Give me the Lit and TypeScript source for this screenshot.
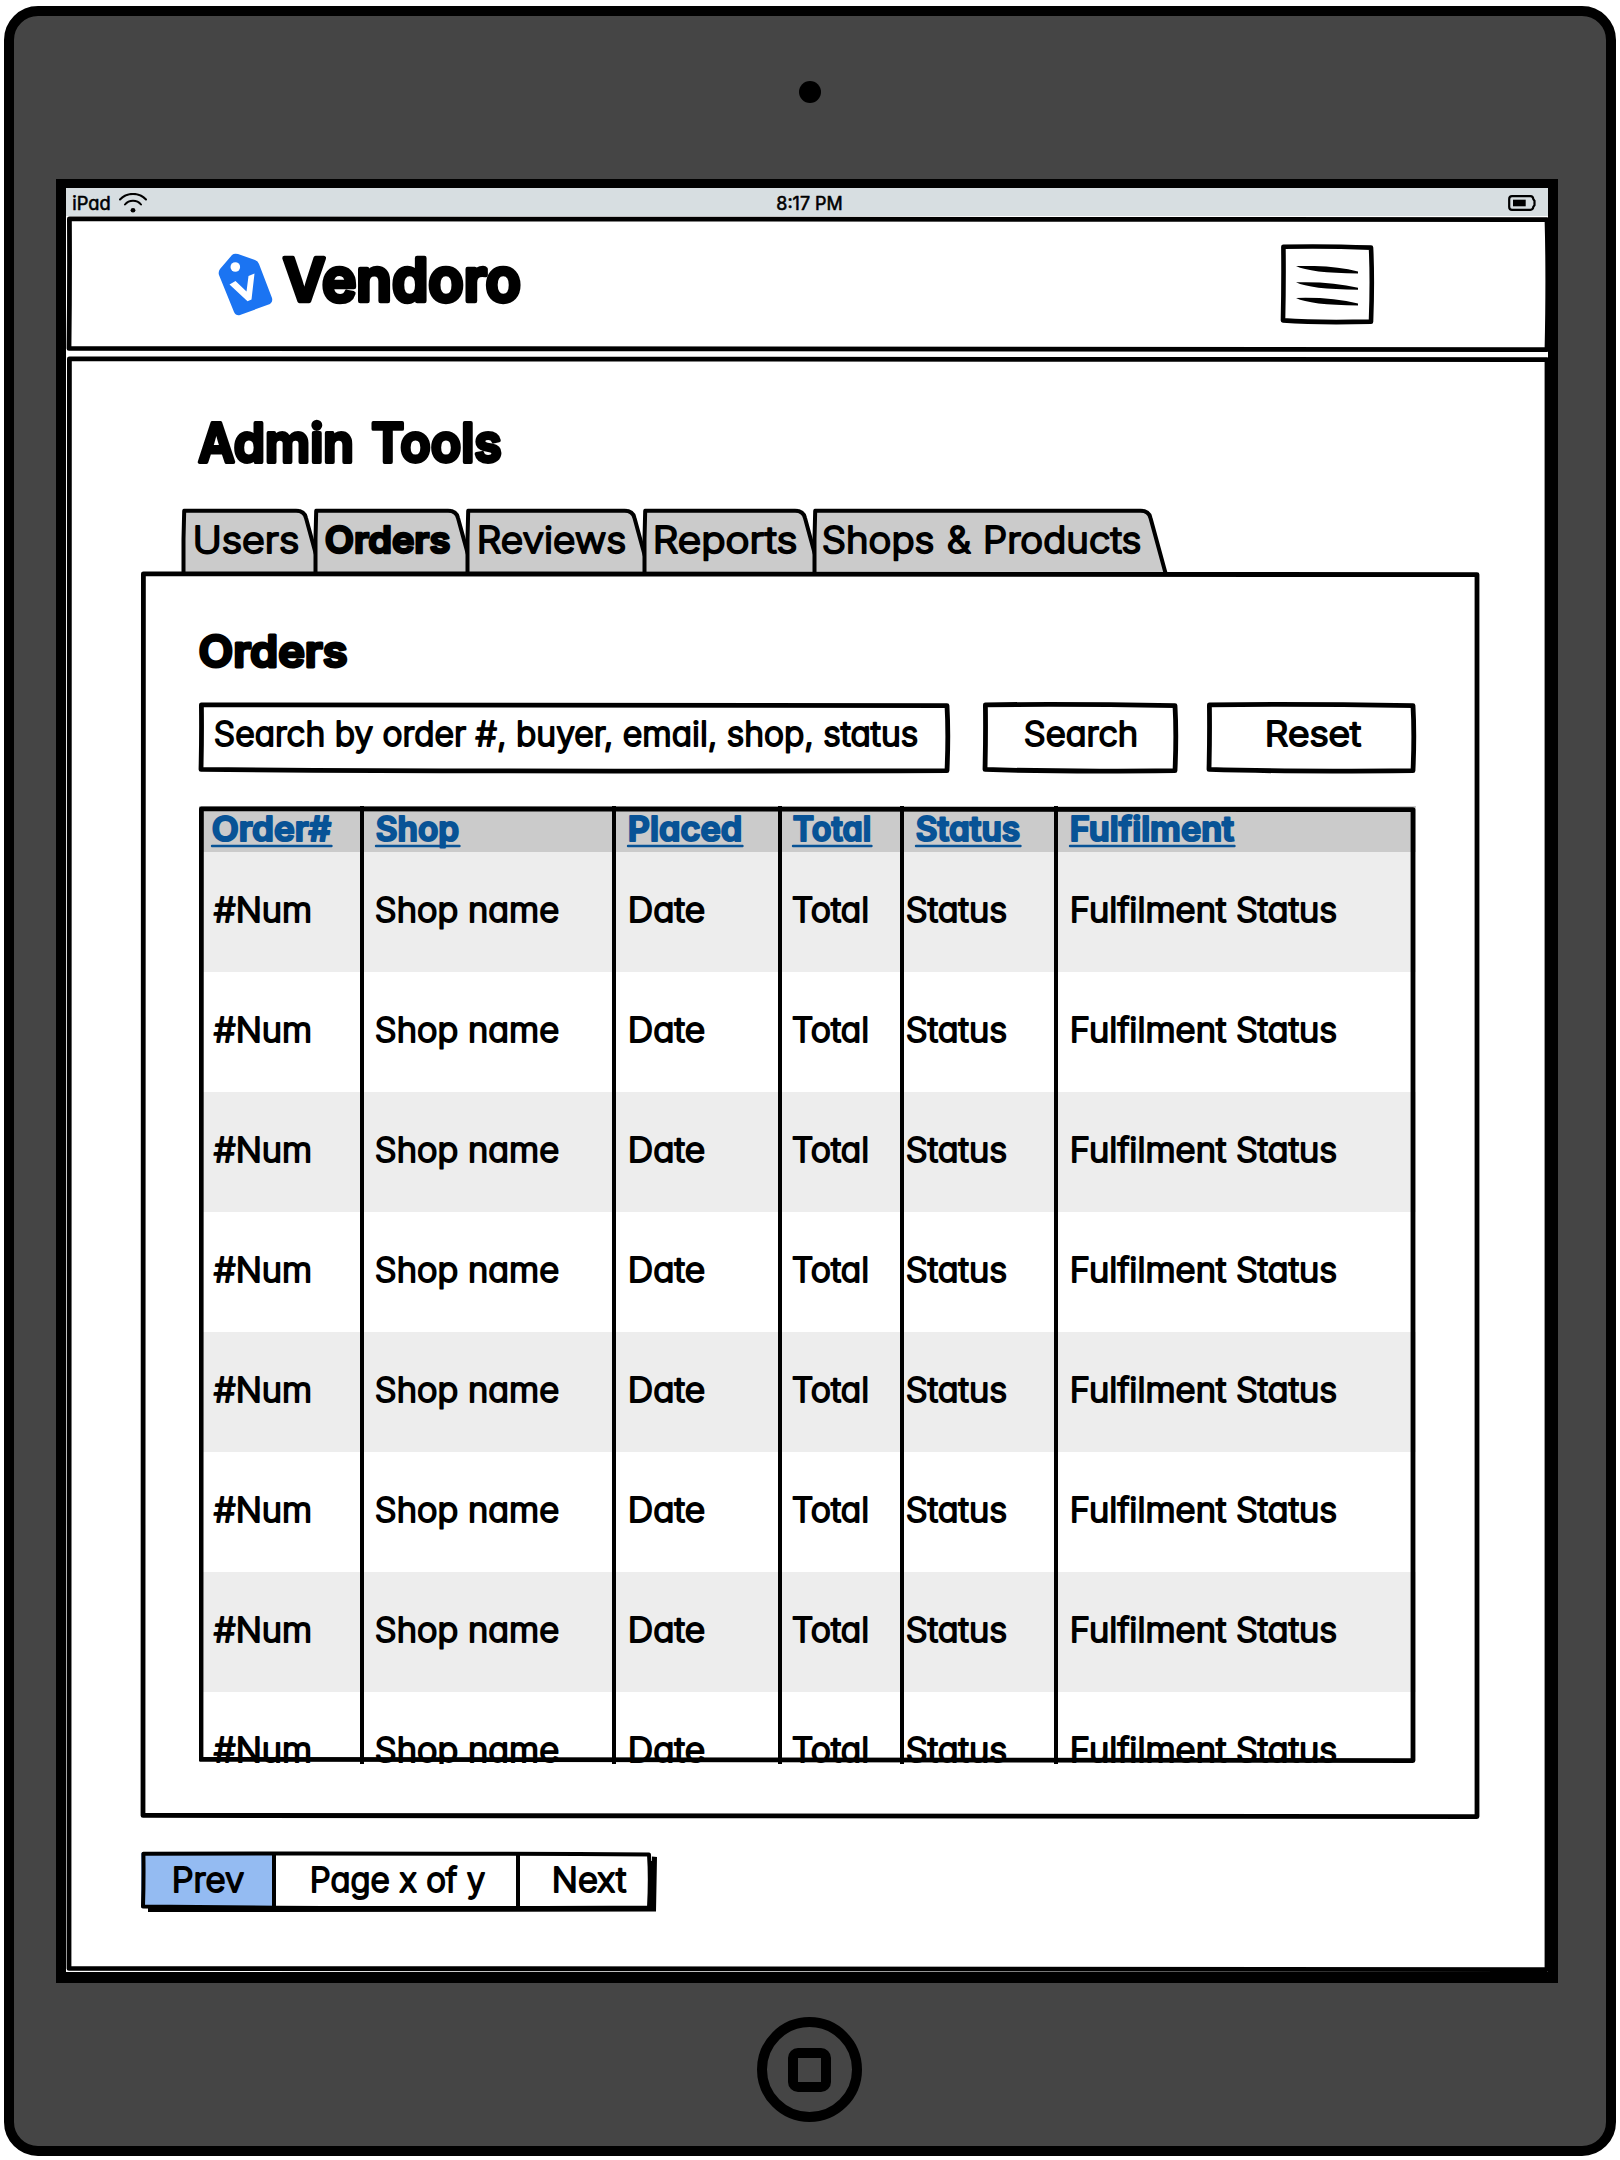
import { LitElement, html, svg, css } from "lit";
import { customElement, property } from "lit/decorators.js";

/* One line of hand-lettered text. Its box runs from cap height to baseline. */
@customElement("ink-text")
class InkText extends LitElement {
  @property() text = "";
  @property({ type: Number }) w = 100;
  @property({ type: Number }) size = 33.5;
  @property({ type: Number }) weight = 340;
  @property({ type: Number }) ink = 1.9;
  @property({ type: Number }) gap = 0;
  @property() color = "#000";
  @property({ type: Boolean }) underline = false;
  static styles = css`
    :host { display: block; flex: none; }
    svg { display: block; overflow: visible; }
    text {
      font-family: Inter, "Open Sans", "Liberation Sans", sans-serif;
      font-feature-settings: "cv11" 1;
      stroke-linejoin: round;
      stroke-linecap: round;
      white-space: pre;
    }
  `;
  render() {
    const h = Math.round(this.size * 0.727);
    const pad = this.size * 0.035;
    return html`<svg width=${this.w} height=${h}>
      <text x=${-pad} y=${h} textLength=${this.w + pad * 2} lengthAdjust="spacingAndGlyphs"
        font-size=${this.size} font-weight=${this.weight} word-spacing=${this.gap} fill=${this.color}
        stroke=${this.color} stroke-width=${this.ink}>${this.text}</text>
      ${this.underline
        ? svg`<line x1="-1" x2=${this.w + 1.5} y1=${h + 5} y2=${h + 5} stroke=${this.color} stroke-width="2.4" stroke-linecap="round"/>`
        : ""}
    </svg>`;
  }
}

/* Slightly uneven pen outline laid over its parent box. */
@customElement("pen-frame")
class PenFrame extends LitElement {
  @property({ type: Number }) w = 100;
  @property({ type: Number }) h = 100;
  @property({ type: Number }) pen = 4.8;
  @property({ type: Number }) sway = 1;
  static styles = css`
    :host { position: absolute; inset: 0; pointer-events: none; }
    svg { display: block; overflow: visible; }
  `;
  render() {
    const { w, h, sway: s } = this;
    const d = `M2.4 2.8 Q${w * 0.45} ${2.8 - s} ${w - 3} 3.6 Q${w - 3 + s * 1.6} ${h * 0.45} ${w - 3} ${h - 2.4}
      Q${w * 0.4} ${h - 2 + s} 2 ${h - 3.6} Q${1.8 + s} ${h * 0.5} 2.4 2.8Z`;
    return html`<svg width=${w} height=${h}>
      <path d=${d} fill="none" stroke="#000" stroke-width=${this.pen} stroke-linejoin="round"/>
    </svg>`;
  }
}

const TABS = [
  { label: "Users", width: 132, ink: 104, pad: 12 },
  { label: "Orders", width: 152, ink: 123, pad: 11.5, active: true },
  { label: "Reviews", width: 176.5, ink: 147, pad: 12 },
  { label: "Reports", width: 170, ink: 142, pad: 11.5 },
  { label: "Shops & Products", width: 345.5, ink: 317, pad: 10.5 },
];

const COLUMNS = [
  { head: "Order#", headInk: 117, headPad: 14, cell: "#Num", ink: 96, pad: 16 },
  { head: "Shop", headInk: 81, headPad: 12.5, cell: "Shop name", ink: 182, pad: 11.5 },
  { head: "Placed", headInk: 112, headPad: 12.5, cell: "Date", ink: 75, pad: 12.5 },
  { head: "Total", headInk: 76, headPad: 11.5, cell: "Total", ink: 75, pad: 10.5 },
  { head: "Status", headInk: 102, headPad: 12.5, cell: "Status", ink: 99, pad: 2.5 },
  { head: "Fulfilment", headInk: 162, headPad: 12.5, cell: "Fulfilment Status", ink: 265, pad: 12.5 },
];

const ROWS = 8;

@customElement("app-root")
class AppRoot extends LitElement {
  static styles = css`
    :host { display: block; width: 1620px; height: 2160px; background: #fff; overflow: hidden; }
    * { box-sizing: border-box; }
    .stage { padding: 6px 4px 4px; height: 2160px; }
    .device {
      height: 2150px; border: 10px solid #000; border-radius: 34px; background: #454545;
      display: flex; flex-direction: column; align-items: center;
    }
    .camera { width: 22px; height: 22px; border-radius: 50%; background: #000; margin: 65px 1px 0 0; flex: none; }
    .screen {
      width: 1502px; height: 1804px; margin: 76px 0 0 42px; flex: none; background: #fff;
      border: solid #000; border-width: 9px 10px 11px; align-self: flex-start;
      display: flex; flex-direction: column;
    }
    .home {
      width: 105px; height: 105px; border: 10px solid #000; border-radius: 50%; margin: 34px 1px 0 0; flex: none;
      display: grid; place-items: center;
    }
    .home-key { width: 43px; height: 44px; border: 10px solid #000; border-radius: 10px; }
    .status {
      height: 28px; flex: none; background: #d7dee1; padding: 2px 13px 0 7px;
      display: grid; grid-template-columns: 1fr auto 1fr; align-items: center;
    }
    .carrier { display: flex; align-items: center; gap: 9px; }
    .clock { margin-left: 11px; }
    .battery { justify-self: end; margin-right: -1px; }
    svg { display: block; }
    .header {
      position: relative; margin: 0 0 0 1px; width: 1482px; height: 136px; flex: none;
      display: flex; justify-content: space-between; align-items: flex-start; padding: 28px 175px 0 151px;
    }
    .brand { display: flex; gap: 12px; padding-top: 9px; }
    .brand ink-text { margin-top: 5px; }
    .menu { position: relative; width: 93px; height: 80px; padding: 22px 15px; }
    .body {
      position: relative; margin: 4px 0 0 1px; width: 1482px; height: 1616px; flex: none; padding-left: 74px;
    }
    .title { margin: 67px 0 0 59px; }
    .tabs { display: flex; margin: 47px 0 0 41px; height: 62px; }
    .tab { position: relative; height: 62px; padding-top: 17px; flex: none; }
    .tab-shape { position: absolute; inset: 0; }
    .tab-shape svg { overflow: visible; }
    .tab ink-text { position: relative; }
    .panel { position: relative; width: 1339px; height: 1248px; padding: 64px 63px 0 58px; }
    .heading { margin-left: 1px; }
    .search { display: flex; margin-top: 35px; height: 72px; }
    .box { position: relative; height: 72px; display: flex; padding-top: 20px; }
    .field { width: 751px; padding-left: 16px; }
    .go { width: 195px; margin-left: 33px; padding-left: 42px; }
    .reset { width: 209px; margin-left: 29px; padding-left: 59px; }
    .table { position: relative; margin-top: 32px; width: 1217px; height: 958px; overflow: hidden; }
    .row { display: grid; grid-template-columns: 161px 252px 166px 122px 154px 1fr; height: 120px; background: #fff; }
    .row.odd { background: #ededed; }
    .row.head { height: 46px; background: #cbcbcb; }
    .cell { border-left: 4px solid #000; padding-top: 46px; }
    .cell:first-child { border-left: 0; }
    .head .cell { padding-top: 11px; }
    .pager { position: relative; display: flex; width: 516px; height: 61px; margin-top: 32px; }
    .page {
      position: relative; height: 55px; margin-top: 2px; padding-top: 15px; border-right: 4px solid #000; background: #fff;
    }
    .prev { width: 135px; background: #94bbf2; padding-left: 32px; }
    .pages { width: 244px; padding-left: 35px; }
    .next { width: 129px; padding-left: 33px; border-right: 0; }
    .shade { position: absolute; inset: 0; }
  `;

  private tab(t: (typeof TABS)[number]) {
    const w = t.width;
    return html`<div class="tab" style="width:${w}px;padding-left:${t.pad}px">
      <div class="tab-shape">
        <svg width=${w + 10} height="64">
          <path d="M1.500 64 L1.500 30 L2.200 1.800 H${w - 18} Q${w - 9.5} 1.800 ${w - 8} 9 L${w + 7} 64" fill="#cbcbcb" stroke="#000" stroke-width="4" stroke-linejoin="round"/>
        </svg>
      </div>
      <ink-text .text=${t.label} .w=${t.ink} .size=${37} .gap=${1.5} .weight=${t.active ? 600 : 340} .ink=${t.active ? 2.5 : 2}></ink-text>
    </div>`;
  }

  render() {
    return html`
      <div class="stage"><div class="device">
        <div class="camera"></div>
        <div class="screen">
          <div class="status">
            <div class="carrier">
              <ink-text .text=${"iPad"} .w=${37} .size=${18.5} .weight=${400} .ink=${0.6}></ink-text>
              <svg width="28" height="20" viewBox="0 0 28 20" fill="none" stroke="#000" stroke-width="2" stroke-linecap="round">
                <path d="M1 6.500C8-1 20-1 27 6.500M6 11.500c4-5 12-5 16 0"/>
                <ellipse cx="14" cy="17.300" rx="2.400" ry="2.300" fill="#000" stroke="none"/>
              </svg>
            </div>
            <ink-text class="clock" .text=${"8:17 PM"} .w=${65} .size=${18.5} .weight=${400} .ink=${0.6}></ink-text>
            <svg class="battery" width="28" height="16" viewBox="0 0 28 16">
              <path d="M4 1.200H22.500Q25 1.200 25.300 4L26.500 5.800V10.200L25.300 12Q25 14.800 22.500 14.800H4Q1.200 14.800 1.200 12V4Q1.200 1.200 4 1.200Z" fill="none" stroke="#000" stroke-width="2.200"/>
              <rect x="5" y="4.700" width="12.700" height="6.600"/>
            </svg>
          </div>

          <div class="header">
            <div class="brand">
              <svg width="55" height="63" viewBox="0 0 55 63">
                <path d="M14 2Q16 0 20 1L37 7Q40 8 41 11L54 45Q55 49 52 51L22 62Q18 63 16 59L1 22Q0 19 2 16Z" fill="#1b74f2"/>
                <circle cx="17.300" cy="14" r="4.800" fill="#fff"/>
                <path d="M11.500 31.500 17.500 28 28.500 38.500 30.500 23 36.500 20.500 33.500 46.500 29.500 48.300Z" fill="#fff"/>
              </svg>
              <ink-text .text=${"Vendoro"} .w=${234} .size=${59} .weight=${580} .ink=${4.4}></ink-text>
            </div>
            <div class="menu">
              <pen-frame .w=${93} .h=${80} .pen=${4.6}></pen-frame>
              <svg width="63" height="40" viewBox="0 0 63 40">
                <path d="M0 0Q36-1 62 5.500V7.500Q14 7 0 0ZM0 16.300Q36 15.300 62 21.800V23.800Q14 23.300 0 16.300ZM0 32Q36 31 62 37.500V39.500Q14 39 0 32Z"/>
              </svg>
            </div>
            <pen-frame .w=${1483} .h=${136}></pen-frame>
          </div>

          <div class="body">
            <pen-frame .w=${1483} .h=${1616}></pen-frame>
            <ink-text class="title" .text=${"Admin Tools"} .w=${300} .size=${53.5} .weight=${580} .ink=${3.8} .gap=${5}></ink-text>
            <div class="tabs">${TABS.map((t) => this.tab(t))}</div>
            <div class="panel">
              <pen-frame .w=${1339} .h=${1248}></pen-frame>
              <ink-text class="heading" .text=${"Orders"} .w=${146} .size=${44} .weight=${580} .ink=${3}></ink-text>
              <div class="search">
                <div class="box field">
                  <pen-frame .w=${751} .h=${71}></pen-frame>
                  <ink-text .text=${"Search by order #, buyer, email, shop, status"} .w=${702}></ink-text>
                </div>
                <div class="box go">
                  <pen-frame .w=${195} .h=${71}></pen-frame>
                  <ink-text .text=${"Search"} .w=${112}></ink-text>
                </div>
                <div class="box reset">
                  <pen-frame .w=${209} .h=${71}></pen-frame>
                  <ink-text .text=${"Reset"} .w=${94}></ink-text>
                </div>
              </div>
              <div class="table">
                <div class="row head">
                  ${COLUMNS.map((c) => html`<div class="cell" style="padding-left:${c.headPad}px">
                    <ink-text .text=${c.head} .w=${c.headInk} .size=${33.5} .weight=${600} .ink=${2.1} .color=${"#085396"} underline></ink-text>
                  </div>`)}
                </div>
                ${Array.from({ length: ROWS }, (_, i) => html`<div class="row ${i % 2 ? "" : "odd"}">
                  ${COLUMNS.map((c) => html`<div class="cell" style="padding-left:${c.pad}px">
                    <ink-text .text=${c.cell} .w=${c.ink}></ink-text>
                  </div>`)}
                </div>`)}
                <pen-frame .w=${1217} .h=${957}></pen-frame>
              </div>
            </div>
            <div class="pager">
              <div class="shade">
                <svg width="516" height="61"><path d="M7 10H511V5.500L516 6 515 60.500 7 61Z"/></svg>
              </div>
              <div class="page prev"><ink-text .text=${"Prev"} .w=${70}></ink-text></div>
              <div class="page pages"><ink-text .text=${"Page x of y"} .w=${173}></ink-text></div>
              <div class="page next"><ink-text .text=${"Next"} .w=${72}></ink-text></div>
              <pen-frame .w=${511} .h=${59} .pen=${4}></pen-frame>
            </div>
          </div>
        </div>
        <div class="home"><div class="home-key"></div></div>
      </div></div>
    `;
  }
}
